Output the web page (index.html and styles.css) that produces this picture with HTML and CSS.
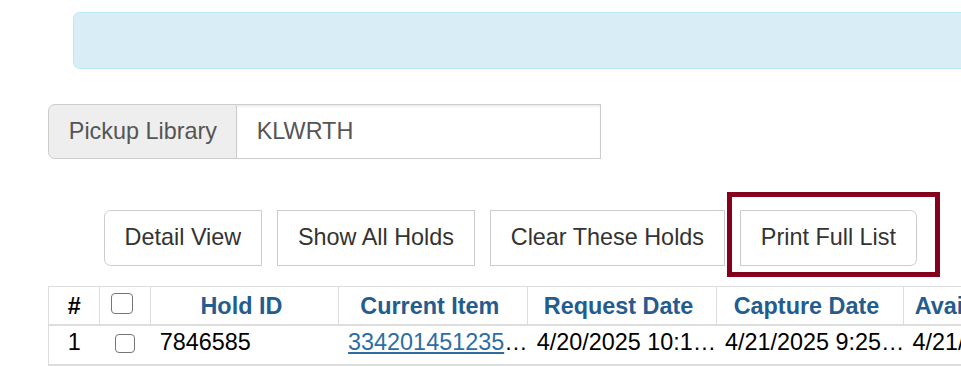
FILE: index.html
```html
<!DOCTYPE html>
<html>
<head>
<meta charset="utf-8">
<link rel="stylesheet" href="styles.css">
</head>
<body>
<div class="alert"></div>

<div class="input-group">
  <span class="addon">Pickup Library</span>
  <span class="field">KLWRTH</span>
</div>

<div class="toolbar">
  <button class="btn btn-first">Detail View</button>
  <button class="btn">Show All Holds</button>
  <button class="btn">Clear These Holds</button>
  <span class="highlight"><button class="btn btn-last">Print Full List</button></span>
</div>

<table class="holds">
  <colgroup>
    <col class="c-num"><col class="c-chk"><col class="c-id"><col class="c-item"><col class="c-req"><col class="c-cap"><col class="c-avail"><col class="c-more">
  </colgroup>
  <thead>
    <tr>
      <th class="num">#</th>
      <th><input type="checkbox" class="chk chk-head"></th>
      <th>Hold ID</th>
      <th>Current Item</th>
      <th>Request Date</th>
      <th>Capture Date</th>
      <th>Available Date</th>
      <th>Pickup Library</th>
    </tr>
  </thead>
  <tbody>
    <tr>
      <td class="center first">1</td>
      <td><input type="checkbox" class="chk chk-body"></td>
      <td>7846585</td>
      <td class="item"><a href="#">334201451235</a>…</td>
      <td>4/20/2025 10:1…</td>
      <td>4/21/2025 9:25…</td>
      <td>4/21/2025 9:25…</td>
      <td>KLWRTH</td>
    </tr>
  </tbody>
</table>
</body>
</html>
```

FILE: styles.css
```css
html, body {
  margin: 0;
  padding: 0;
  overflow: hidden;
  background: #fff;
}
body {
  font-family: "Liberation Sans", Arial, sans-serif;
  font-size: 23.4px;
  line-height: 33px;
  color: #333;
}
* { box-sizing: border-box; }

.alert {
  margin: 12px 0 0 72.5px;
  width: 1000px;
  height: 57px;
  background: #d9edf7;
  border: 1px solid #bce8f1;
  border-radius: 6.6px;
}

.input-group {
  display: flex;
  margin: 35px 0 0 48px;
  width: 552.7px;
  height: 55.3px;
}
.addon {
  display: flex;
  align-items: center;
  padding: 0 19.8px;
  width: 188.7px;
  background: #eee;
  border: 1px solid #ccc;
  border-radius: 6.6px 0 0 6.6px;
  color: #555;
  white-space: nowrap;
}
.field {
  flex: 1;
  display: flex;
  align-items: center;
  padding: 0 20px;
  border: 1px solid #ccc;
  border-left: none;
  color: #555;
  box-shadow: inset 0 1.65px 1.65px rgba(0,0,0,.075);
}

.toolbar {
  display: flex;
  gap: 15.6px;
  margin: 50.7px 0 0 104px;
}
.btn {
  font: inherit;
  color: #333;
  background: #fff;
  border: 1px solid #ccc;
  border-radius: 0;
  padding: 10.3px 19.6px;
  height: 55.7px;
  line-height: 33px;
  margin: 0;
  white-space: nowrap;
}
.btn-first { border-radius: 6.6px 0 0 6.6px; }
.btn-last { border-radius: 0 6.6px 6.6px 0; }

.highlight {
  position: relative;
  display: block;
}
.highlight::after {
  content: "";
  position: absolute;
  left: -13.3px;
  top: -17.7px;
  right: -23px;
  bottom: -11px;
  border: 5px solid #84001c;
  pointer-events: none;
}

.holds {
  margin: 20.3px 0 0 48px;
  border-collapse: separate;
  border-spacing: 0;
  table-layout: fixed;
  width: 1400px;
}
.c-num { width: 51.3px; }
.c-chk { width: 51.2px; }
.c-id { width: 187.8px; }
.c-item { width: 189.2px; }
.c-req { width: 188.2px; }
.c-cap { width: 187.6px; }
.c-avail { width: 188px; }
.c-more { width: 356.7px; }

.holds th {
  font-weight: bold;
  color: #245c8f;
  text-align: center;
  padding: 3.3px 8px 0.4px 1px;
  line-height: 33px;
  border-top: 1px solid #ddd;
  border-left: 1px solid #ddd;
  border-bottom: 2px solid #ddd;
  white-space: nowrap;
  overflow: hidden;
  vertical-align: top;
}
.holds th.num { color: #000; padding: 3.3px 4px 0.4px; }

.holds td {
  color: #000;
  padding: 0 0 5px 9.3px;
  line-height: 33px;
  border-bottom: 2px solid #ddd;
  white-space: nowrap;
  overflow: hidden;
  vertical-align: top;
}
.holds td.item { padding-left: 9.8px; }
.holds td.first { border-left: 1px solid #ddd; }
.holds td.center { text-align: center; padding: 0 0 5px; }
.holds a {
  color: #2e6da4;
  text-decoration: underline;
}

.chk {
  appearance: none;
  -webkit-appearance: none;
  display: block;
  margin: 0 auto;
  border: 1.6px solid #767676;
  border-radius: 4px;
  background: #fff;
}
.chk-head {
  width: 21.5px;
  height: 21px;
  margin-top: 2.7px;
}
.chk-body {
  width: 20px;
  height: 19.5px;
  margin-top: 8.3px;
  margin-left: 6px;
}
```
